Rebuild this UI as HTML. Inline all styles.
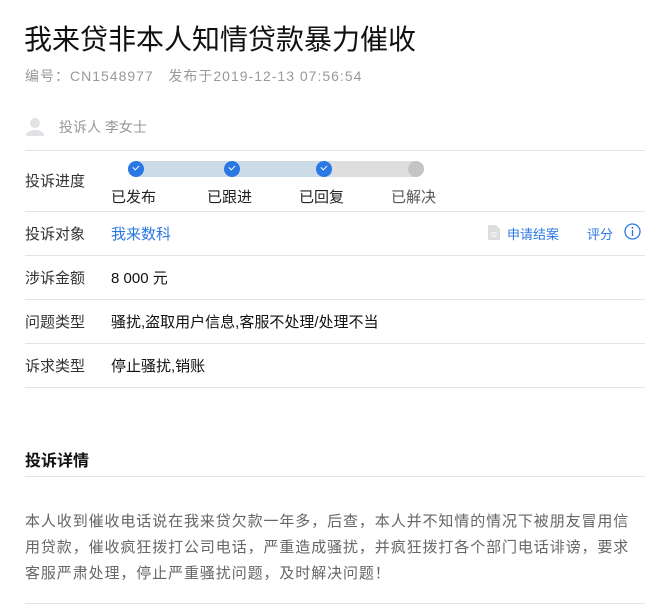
<!DOCTYPE html>
<html><head><meta charset="utf-8"><style>
*{margin:0;padding:0;box-sizing:border-box}
body{width:664px;height:609px;background:#fff;font-family:"Liberation Sans","Noto Sans CJK SC",sans-serif;color:#222;position:relative;overflow:hidden}
.a{position:absolute;white-space:nowrap}
.ln{position:absolute;left:25px;width:620px;height:1px;background:#e3e3e3}
.lbl{position:absolute;left:25px;font-size:15px;color:#333}
.val{position:absolute;left:111px;font-size:15px;color:#111}
.dot{position:absolute;top:161px;width:16px;height:16px;border-radius:50%;background:#2a78e4}
.dot:after{content:"";position:absolute;left:5px;top:4px;width:5px;height:3px;border-left:1.5px solid #fff;border-bottom:1.5px solid #fff;transform:rotate(-45deg)}
</style></head><body>
<div class="a" style="left:24px;top:18px;font-size:28px;color:#111">我来贷非本人知情贷款暴力催收</div>
<div class="a" style="left:25px;top:66px;font-size:14px;color:#999;letter-spacing:1px">编号：CN1548977 &nbsp;&nbsp;发布于2019-12-13 07:56:54</div>
<svg class="a" style="left:25px;top:116px" width="20" height="20"><circle cx="10" cy="7" r="5" fill="#e2e2e6"/><ellipse cx="10" cy="19" rx="9" ry="5" fill="#e2e2e6"/></svg>
<div class="a" style="left:59px;top:117px;font-size:14px;color:#999">投诉人 李女士</div>
<div class="ln" style="top:150px"></div>
<div class="lbl" style="top:170px">投诉进度</div>
<div class="a" style="left:128px;top:161px;width:296px;height:16px;border-radius:8px;background:#dedede"></div>
<div class="a" style="left:128px;top:161px;width:204px;height:16px;border-radius:8px 0 0 8px;background:#cddbe6"></div>
<div class="dot" style="left:128px"></div>
<div class="dot" style="left:224px"></div>
<div class="dot" style="left:316px"></div>
<div class="a" style="left:408px;top:161px;width:16px;height:16px;border-radius:50%;background:#c4c4c4"></div>
<div class="a" style="left:111px;top:186px;font-size:15px">已发布</div>
<div class="a" style="left:207px;top:186px;font-size:15px">已跟进</div>
<div class="a" style="left:299px;top:186px;font-size:15px">已回复</div>
<div class="a" style="left:391px;top:186px;font-size:15px;color:#555">已解决</div>
<div class="ln" style="top:211px"></div>
<div class="lbl" style="top:223px">投诉对象</div>
<div class="val" style="top:223px;color:#2a78e4">我来数科</div>
<svg class="a" style="left:488px;top:225px" width="12" height="15"><path d="M0 1Q0 0 1 0H8L12 4V14Q12 15 11 15H1Q0 15 0 14Z" fill="#ddd"/><path d="M3 8H9M3 11H9" stroke="#fff" stroke-width="1"/></svg>
<div class="a" style="left:507px;top:224px;font-size:13px;color:#2a78e4">申请结案</div>
<div class="a" style="left:587px;top:224px;font-size:13px;color:#2a78e4">评分</div>
<svg class="a" style="left:624px;top:223px" width="17" height="17"><circle cx="8.5" cy="8.5" r="7.5" fill="none" stroke="#2a78e4" stroke-width="1.3"/><circle cx="8.5" cy="4.8" r="1" fill="#2a78e4"/><path d="M8.5 7V13" stroke="#2a78e4" stroke-width="1.4"/></svg>
<div class="ln" style="top:255px"></div>
<div class="lbl" style="top:267px">涉诉金额</div>
<div class="val" style="top:267px">8 000 元</div>
<div class="ln" style="top:299px"></div>
<div class="lbl" style="top:311px">问题类型</div>
<div class="val" style="top:311px">骚扰,盗取用户信息,客服不处理/处理不当</div>
<div class="ln" style="top:343px"></div>
<div class="lbl" style="top:355px">诉求类型</div>
<div class="val" style="top:355px">停止骚扰,销账</div>
<div class="ln" style="top:387px"></div>
<div class="a" style="left:25px;top:447px;font-size:16px;font-weight:bold;color:#111">投诉详情</div>
<div class="ln" style="top:476px"></div>
<div class="a" style="left:25px;top:509px;font-size:15px;line-height:26px;color:#666;letter-spacing:0.9px">本人收到催收电话说在我来贷欠款一年多，后查，本人并不知情的情况下被朋友冒用信<br>用贷款，催收疯狂拨打公司电话，严重造成骚扰，并疯狂拨打各个部门电话诽谤，要求<br>客服严肃处理，停止严重骚扰问题，及时解决问题！</div>
<div class="ln" style="top:603px"></div>
</body></html>
